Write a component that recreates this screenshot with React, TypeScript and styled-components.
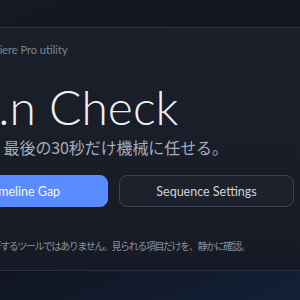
import React from "react";
import styled, { createGlobalStyle } from "styled-components";

const Global = createGlobalStyle`
  html, body { margin: 0; padding: 0; }
  body {
    width: 300px;
    height: 300px;
    overflow: hidden;
    background: #10141d;
    font-family: Lato, "Noto Sans CJK JP", sans-serif;
  }
`;

const Viewport = styled.div`
  width: 300px;
  height: 300px;
  overflow: hidden;
  background: linear-gradient(160deg, #141924 0%, #0f131c 60%, #142038 100%);
  padding-top: 27px;
  box-sizing: border-box;
`;

const Card = styled.section`
  margin-left: -100px;
  width: 440px;
  height: 244px;
  box-sizing: border-box;
  border-top: 1px solid #2b313d;
  border-bottom: 1px solid #283044;
  background: linear-gradient(180deg, #1b1f2a 0%, #191d28 60%, #161a25 100%);
  padding: 15px 40px 0 40px;
  display: flex;
  flex-direction: column;
`;

const Meta = styled.div`
  font-family: Lato, sans-serif;
  font-size: 11px;
  color: #7f8594;
  line-height: 14px;
`;

const Title = styled.h1`
  margin: 25px 0 0 0;
  font-family: Lato, sans-serif;
  font-weight: 300;
  font-size: 48px;
  line-height: 50px;
  color: #eef0f4;
  white-space: nowrap;
`;

const Subtitle = styled.p`
  margin: 4px 0 0 0;
  font-family: "Noto Sans CJK JP", sans-serif;
  font-size: 16px;
  line-height: 22px;
  color: #a6acb8;
  white-space: nowrap;
  letter-spacing: -0.1px;
`;

const Actions = styled.div`
  margin-top: 17px;
  display: grid;
  grid-template-columns: 168px 175px;
  gap: 11px;
`;

const Button = styled.button<{ $primary?: boolean }>`
  height: 32px;
  border-radius: 8px;
  font-family: Lato, sans-serif;
  font-size: 12.5px;
  font-weight: 400;
  cursor: pointer;
  box-sizing: border-box;
  border: 1px solid ${(p) => (p.$primary ? "#5b8cff" : "#3a4254")};
  background: ${(p) => (p.$primary ? "#5b8cff" : "#1c212c")};
  color: ${(p) => (p.$primary ? "#f4f7ff" : "#cfd3db")};
`;

const Note = styled.p`
  margin: 32px 0 0 0;
  font-family: "Noto Sans CJK JP", sans-serif;
  font-size: 10px;
  line-height: 14px;
  color: #8a909c;
  white-space: nowrap;
  letter-spacing: -1.4px;
`;

export default function App() {
  return (
    <>
      <Global />
      <Viewport>
        <Card>
          <Meta>Adobe Premiere Pro utility</Meta>
          <Title>Cu.n Check</Title>
          <Subtitle>納品前、最後の30秒だけ機械に任せる。</Subtitle>
          <Actions>
            <Button $primary>Timeline Gap</Button>
            <Button>Sequence Settings</Button>
          </Actions>
          <Note>書き出しを代行するツールではありません。見られる項目だけを、静かに確認。</Note>
        </Card>
      </Viewport>
    </>
  );
}
